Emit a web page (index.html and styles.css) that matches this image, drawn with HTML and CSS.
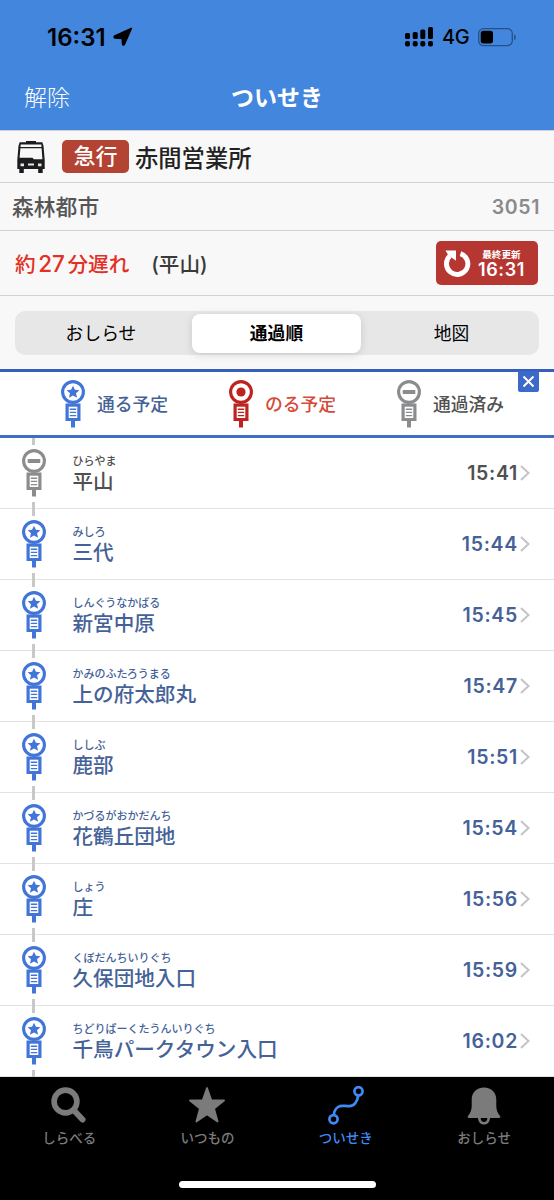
FILE: index.html
```html
<!DOCTYPE html>
<html lang="ja">
<head>
    <meta charset="UTF-8">
    <meta name="viewport" content="width=device-width, initial-scale=1.0">
    <title>ついせき</title>
    <link rel="stylesheet" href="styles.css">
</head>
<body>
    <!-- Shared icons -->
    <svg class="defs" width="0" height="0">
        <symbol id="pole" viewBox="0 0 24 48">
            <circle cx="12" cy="12" r="10.4" fill="#fff" stroke="currentColor" stroke-width="3.1"/>
            <path d="M4.5 23.5h15v17.5h-15z" fill="currentColor"/>
            <path d="M10 41h4v6.5h-4z" fill="currentColor"/>
            <path d="M7.7 26.7h8.6v11.3H7.7z" fill="#fff"/>
            <path d="M8.8 29.2h6.4M8.8 32.4h6.4M8.8 35.6h6.4" stroke="currentColor" stroke-width="1.4"/>
        </symbol>
        <symbol id="stop-plan" viewBox="0 0 24 48">
            <use href="#pole"/>
            <path d="M12 5.8l1.9 4 4.5.5-3.4 3 1.1 4.5-4.1-2.4-4.1 2.4 1.1-4.5-3.4-3 4.5-.5z" fill="currentColor"/>
        </symbol>
        <symbol id="stop-ride" viewBox="0 0 24 48">
            <use href="#pole"/>
            <circle cx="12" cy="12" r="4.6" fill="currentColor"/>
        </symbol>
        <symbol id="stop-past" viewBox="0 0 24 48">
            <use href="#pole"/>
            <path d="M5.7 10h12.6v4H5.7z" fill="currentColor"/>
        </symbol>
    </svg>

    <header>
        <div class="status">
            <span class="clock">16:31</span>
            <svg class="arrow" width="20" height="20" viewBox="0 0 20 20"><path d="M18.3 1.4L11.3 17.4c-.4.9-1.7.7-1.7-.4L9.2 11.4l-7.200-.5c-1-.1-1.200-1.400-.2-1.900z" stroke="#000" stroke-width="1.6" stroke-linejoin="round"/></svg>
            <svg class="signal" width="29" height="20" viewBox="0 0 29 20">
                <rect x="0" y="6" width="5" height="6" rx="1.5"/><rect x="7.7" y="5" width="5" height="7" rx="1.5"/><rect x="15.3" y="2.5" width="5" height="9.5" rx="1.5"/><rect x="23" y="0" width="5" height="12" rx="1.5"/>
                <rect x="0" y="14" width="5" height="5.5" rx="2"/><rect x="7.7" y="14" width="5" height="5.5" rx="2"/><rect x="15.3" y="14" width="5" height="5.5" rx="2"/><rect x="23" y="14" width="5" height="5.5" rx="2"/>
            </svg>
            <span class="network">4G</span>
            <svg class="battery" width="39" height="19" viewBox="0 0 39 19">
                <rect x=".7" y=".7" width="33.6" height="16.9" rx="4.8" fill="none" stroke="#265188" stroke-width="1.3"/>
                <rect x="2.7" y="2.8" width="12.3" height="12.7" rx="2.7"/>
                <path d="M36.2 6.2c2.2.8 2.2 5.2 0 6z" fill="#265188"/>
            </svg>
        </div>
        <nav>
            <a class="cancel">解除</a>
            <h1>ついせき</h1>
        </nav>
    </header>

    <section class="bus-info">
        <div class="route">
            <svg class="bus" width="28" height="32" viewBox="0 0 28 32">
                <path d="M9 0h10v1.3h6.3l1.2 3.500L27.700 19v9H.3v-9L1.500 4.800l1.200-3.500H9z" fill="#1c1c1e"/>
                <path d="M3.700 3.500h20.600l.2 2.500h-21zM3.400 7.200h21.200l.8 11H16.800l-1.300-1.500H2.600z" fill="#f8f8f8"/>
                <path d="M3.500 22.500h3.500v2.700h-3.500zM21 22.500h3.500v2.700H21zM11 22.500h6v2h-6z" fill="#e4e4e4"/>
                <path d="M2.300 27.500h4.500V32H2.300zM21.200 27.500h4.500V32h-4.500z" fill="#1c1c1e"/>
            </svg>
            <span class="type">急行</span>
            <strong>赤間営業所</strong>
        </div>
        <div class="via">
            <span>森林都市</span>
            <span class="number">3051</span>
        </div>
        <div class="delay">
            <span class="late">約<b>27</b>分遅れ</span>
            <span class="place">(平山)</span>
            <button class="update">
                <svg width="27" height="27" viewBox="0 0 27 27">
                    <path d="M16.5 3.6A10.7 10.7 0 1 1 6 5.8" fill="none" stroke="#fff" stroke-width="4.9"/>
                    <path d="M1.5.5h10.5v10.3L8.6 8.3 4 4.8z" fill="#fff"/>
                </svg>
                <span class="update-text"><small>最終更新</small><b>16:31</b></span>
            </button>
        </div>
    </section>

    <div class="segment-wrap">
        <div class="segment">
            <a>おしらせ</a>
            <a class="active">通過順</a>
            <a>地図</a>
        </div>
    </div>

    <div class="legend">
        <div class="plan"><svg class="stop"><use href="#stop-plan"/></svg><span>通る予定</span></div>
        <div class="ride"><svg class="stop"><use href="#stop-ride"/></svg><span>のる予定</span></div>
        <div class="past"><svg class="stop"><use href="#stop-past"/></svg><span>通過済み</span></div>
        <button class="close"><svg width="13" height="13" viewBox="0 0 13 13"><path d="M1.5 1.5l10 10M11.5 1.5l-10 10" stroke="#fff" stroke-width="2"/></svg></button>
    </div>

    <ul class="stops" id="stops"></ul>

    <footer>
        <div class="tabs">
            <a>
                <svg width="36" height="37" viewBox="0 0 36 37"><circle cx="14.5" cy="14.5" r="11.4" fill="none" stroke="currentColor" stroke-width="5.6"/><path d="M23.5 24l8 8.5" stroke="currentColor" stroke-width="6" stroke-linecap="round"/></svg>
                <span>しらべる</span>
            </a>
            <a>
                <svg width="36" height="37" viewBox="0 0 36 37"><path d="M18 1l4.3 12.2 12.7.3-10 8 3.6 13L18 27.2 7.4 34.5l3.6-13-10-8 12.7-.3z" fill="currentColor" stroke="currentColor" stroke-width="1.8" stroke-linejoin="round"/></svg>
                <span>いつもの</span>
            </a>
            <a class="active">
                <svg width="36" height="39" viewBox="0 0 36 39" fill="none" stroke="currentColor" stroke-width="2.7"><circle cx="30.5" cy="5.3" r="4.1"/><circle cx="5.5" cy="33.2" r="4.1"/><path d="M30.2 9.5C29.5 15 26.5 20 21.5 20.2 17 20.5 13.5 18.5 10 21 7 23 6 26 5.8 29.2"/></svg>
                <span>ついせき</span>
            </a>
            <a>
                <svg width="36" height="38" viewBox="0 0 36 38"><path d="M18 1C10.5 1 5.7 6 5.7 13v6.5c0 4-1.2 7-3.6 9.8-.9 1.1-.4 2.2.9 2.2h30c1.3 0 1.8-1.1.9-2.2-2.4-2.8-3.6-5.8-3.6-9.8V13C30.3 6 25.5 1 18 1z" fill="currentColor"/><path d="M13.3 31.5c.4 7 9 7 9.4 0" fill="none" stroke="currentColor" stroke-width="2.7"/></svg>
                <span>おしらせ</span>
            </a>
        </div>
        <div class="home-bar"></div>
    </footer>

    <script>
        const stops = [
            { kana: "ひらやま", name: "平山", time: "15:41", past: true },
            { kana: "みしろ", name: "三代", time: "15:44" },
            { kana: "しんぐうなかばる", name: "新宮中原", time: "15:45" },
            { kana: "かみのふたろうまる", name: "上の府太郎丸", time: "15:47" },
            { kana: "ししぶ", name: "鹿部", time: "15:51" },
            { kana: "かづるがおかだんち", name: "花鶴丘団地", time: "15:54" },
            { kana: "しょう", name: "庄", time: "15:56" },
            { kana: "くぼだんちいりぐち", name: "久保団地入口", time: "15:59" },
            { kana: "ちどりぱーくたうんいりぐち", name: "千鳥パークタウン入口", time: "16:02" }
        ];

        document.getElementById("stops").innerHTML = stops.map(stop => `
            <li class="${stop.past ? "past" : "plan"}">
                <div class="marker"><svg class="stop"><use href="#stop-${stop.past ? "past" : "plan"}"/></svg></div>
                <div class="name"><small>${stop.kana}</small><span>${stop.name}</span></div>
                <time>${stop.time}</time>
                <svg class="chevron" width="10" height="16" viewBox="0 0 10 16"><path d="M1 1l7.5 7L1 15" fill="none" stroke="#c4c4c6" stroke-width="2"/></svg>
            </li>
        `).join("");
    </script>
</body>
</html>
```

FILE: styles.css
```css
* {
    margin: 0;
    padding: 0;
    box-sizing: border-box;
}

body {
    width: 554px;
    height: 1200px;
    overflow: hidden;
    display: flex;
    flex-direction: column;
    background: #fff;
    font-family: "Inter", "Noto Sans CJK JP", sans-serif;
}

svg {
    display: block;
    flex: none;
}

button {
    border: none;
    font-family: inherit;
}

.defs {
    position: absolute;
}

/* Header */
header {
    height: 130px;
    flex: none;
    background: #4386de;
}

.status {
    height: 64px;
    padding: 10px 37px 0 47px;
    display: flex;
    align-items: center;
}

.clock {
    font-size: 24px;
    font-weight: 600;
    width: 66px;
}

.arrow {
    margin-right: auto;
}

.network {
    width: 28px;
    margin: 0 8px;
    font-size: 20px;
    font-weight: 500;
    letter-spacing: -0.5px;
}

nav {
    height: 64px;
    padding: 0 24px;
    display: grid;
    grid-template-columns: 1fr auto 1fr;
    align-items: center;
    color: #fff;
    font-size: 23px;
}

.cancel {
    font-weight: 300;
}

h1 {
    font-size: 23px;
    font-weight: 700;
}

/* Bus info */
.bus-info {
    flex: none;
    background: #f8f8f8;
    color: #3a3a3a;
}

.bus-info > div {
    display: flex;
    align-items: center;
    border-bottom: 1px solid #d2d2d2;
}

.route {
    height: 53px;
    padding-left: 17px;
    border-top: 1px solid #d2d2d2;
}

.type {
    width: 67px;
    height: 33px;
    margin: 0 6px 0 17px;
    border-radius: 5px;
    background: #b34433;
    color: #fff;
    font-size: 22px;
    font-weight: 500;
    line-height: 33px;
    text-align: center;
}

.route strong {
    color: #222;
    font-size: 23.3px;
    font-weight: 500;
}

.via {
    height: 48px;
    padding: 0 14px 0 12px;
    justify-content: space-between;
    color: #555;
    font-size: 21.8px;
    font-weight: 500;
    line-height: 46px;
}

.number {
    color: #8a8a8d;
    font-size: 19.5px;
    font-weight: 600;
    letter-spacing: 0.6px;
}

.delay {
    height: 65px;
    padding: 0 16px 0 15px;
    font-size: 20.6px;
    font-weight: 500;
}

.late {
    color: #e33024;
}

.late b {
    margin: 0 2.6px;
    font-size: 22.5px;
    font-weight: 500;
}

.place {
    margin-left: 22px;
}

.update {
    width: 102px;
    height: 44px;
    margin-left: auto;
    padding-left: 8px;
    display: flex;
    align-items: center;
    gap: 7px;
    border-radius: 5px;
    background: #b63732;
    color: #fff;
}

.update-text {
    display: flex;
    flex-direction: column;
    align-items: center;
}

.update small {
    font-size: 9.6px;
    font-weight: 600;
    line-height: 13px;
}

.update b {
    font-size: 18px;
    font-weight: 600;
    line-height: 18px;
    letter-spacing: 0.6px;
}

/* Segmented control */
.segment-wrap {
    height: 73px;
    flex: none;
    padding: 15px 15px 0;
    background: #f8f8f8;
}

.segment {
    height: 44px;
    padding: 3px;
    display: grid;
    grid-template-columns: 174px 169px 1fr;
    border-radius: 10px;
    background: #e7e7e8;
}

.segment a {
    font-size: 17.8px;
    line-height: 39px;
    text-align: center;
}

.segment a:first-child {
    padding-right: 8px;
}

.segment a:last-child {
    padding-left: 6px;
}

.segment .active {
    border-radius: 8px;
    background: #fff;
    box-shadow: 0 2px 8px rgba(0, 0, 0, 0.13);
    font-weight: 700;
}

/* Legend */
.legend {
    position: relative;
    height: 69px;
    flex: none;
    padding-left: 61px;
    display: flex;
    align-items: center;
    border-top: 3px solid #355fba;
    border-bottom: 3px solid #3f6fc2;
    font-size: 17.8px;
    font-weight: 500;
}

.legend div {
    width: 168px;
    flex: none;
    display: flex;
    align-items: center;
    gap: 12px;
}

.legend span {
    padding-bottom: 2px;
}

.stop {
    width: 24px;
    height: 48px;
}

.plan {
    color: #456298;
}

.plan .stop {
    color: #4275d8;
}

.ride {
    color: #d64a3a;
}

.ride .stop {
    color: #bd241f;
}

.past {
    color: #505050;
}

.past .stop {
    color: #8b8c8e;
}

.close {
    position: absolute;
    top: -1px;
    right: 15px;
    width: 21px;
    height: 21px;
    display: flex;
    align-items: center;
    justify-content: center;
    border-radius: 0 0 2px 2px;
    background: #3d69c8;
}

/* Stop list */
.stops {
    height: 639px;
    flex: none;
    list-style: none;
}

.stops li {
    height: 71px;
    padding: 0 24px 0 21px;
    display: flex;
    align-items: center;
    border-bottom: 1px solid #e2e2e3;
}

.marker {
    height: 71px;
    width: 25px;
    flex: none;
    display: flex;
    flex-direction: column;
    align-items: center;
    justify-content: space-between;
}

.marker::before,
.marker::after {
    content: "";
    width: 3px;
    height: 7px;
    background: #c8c8c9;
}

.name {
    margin-left: 26.5px;
    display: flex;
    flex-direction: column;
}

.name small {
    font-size: 11px;
    font-weight: 500;
    line-height: 16px;
}

.name span {
    font-size: 20.6px;
    font-weight: 500;
    line-height: 25px;
}

.stops time {
    margin-left: auto;
    margin-right: 2px;
    font-size: 19.5px;
    font-weight: 600;
    letter-spacing: 0.7px;
}

/* Tab bar */
footer {
    height: 123px;
    flex: none;
    background: #000;
}

.tabs {
    height: 108px;
    padding-top: 9px;
    display: grid;
    grid-template-columns: repeat(4, 138.3px);
}

.tabs a {
    display: flex;
    flex-direction: column;
    align-items: center;
    color: #7b7b7b;
    font-size: 13.5px;
    font-weight: 500;
    line-height: 20px;
}

.tabs svg {
    height: 39px;
    margin-bottom: 3px;
}

.tabs .active {
    color: #3f8af4;
}

.home-bar {
    width: 197px;
    height: 7px;
    margin: -4px auto 0;
    border-radius: 4px;
    background: #fff;
}
```
